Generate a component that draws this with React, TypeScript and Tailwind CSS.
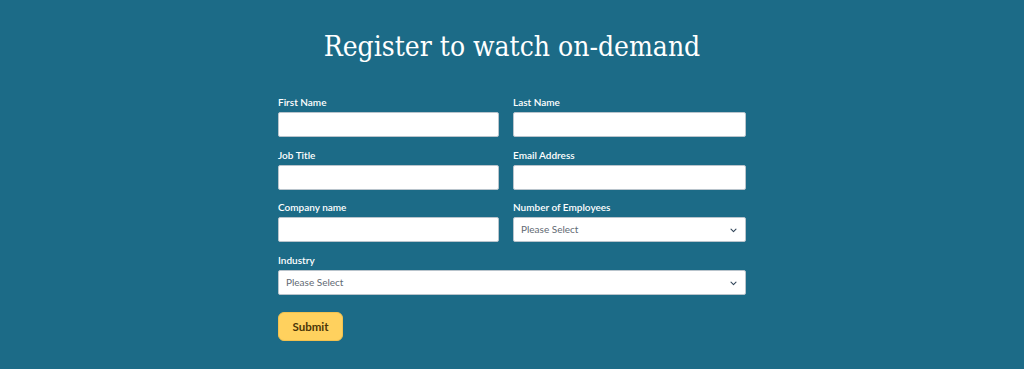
import React from 'react';

const labelCls = "block h-[14px] mt-[1px] mb-[3px] text-[10px] leading-[14px] font-semibold text-white";
const inputCls = "block h-[25px] bg-white border border-[#b9c4cc] rounded-[2px] pl-[7px] pr-2 text-[10px] text-[#33475b] outline-none";

function Chevron() {
    return (
        <svg width="7" height="5" viewBox="0 0 7 5" className="absolute right-[8px] top-[10px]" fill="none">
            <path d="M1 1.2l2.5 2.5 2.5-2.5" stroke="#33475b" strokeWidth="1.1" strokeLinecap="round" strokeLinejoin="round" />
        </svg>
    );
}

function Field({ label, width }: { label: string; width: string }) {
    return (
        <div>
            <label className={labelCls}>{label}</label>
            <input type="text" className={`${inputCls} ${width}`} />
        </div>
    );
}

function SelectField({ label, width }: { label: string; width: string }) {
    return (
        <div>
            <label className={labelCls}>{label}</label>
            <div className={`relative ${inputCls} ${width} flex items-center`}>
                <span className="text-[#5f6a73]">Please Select</span>
                <Chevron />
            </div>
        </div>
    );
}

export default function App() {
    return (
        <div
            className="w-full h-[369px] bg-[#1c6b87] flex flex-col items-center"
            style={{ fontFamily: 'Lato, "Liberation Sans", sans-serif' }}
        >
            <h1
                className="mt-[28px] h-[38px] text-[28px] leading-[38px] text-white font-light font-stretch-condensed"
                style={{ fontFamily: '"DejaVu Serif", "Liberation Serif", serif' }}
            >
                Register to watch on-demand
            </h1>

            <form className="mt-[28px] w-[468px] flex flex-col gap-[9.5px]">
                <div className="flex gap-[14px]">
                    <Field label="First Name" width="w-[221px]" />
                    <Field label="Last Name" width="w-[233px]" />
                </div>
                <div className="flex gap-[14px]">
                    <Field label="Job Title" width="w-[221px]" />
                    <Field label="Email Address" width="w-[233px]" />
                </div>
                <div className="flex gap-[14px]">
                    <Field label="Company name" width="w-[221px]" />
                    <SelectField label="Number of Employees" width="w-[233px]" />
                </div>
                <SelectField label="Industry" width="w-[468px]" />

                <div className="mt-[8px]">
                    <button
                        type="button"
                        className="h-[29px] w-[65px] rounded-[6px] bg-[#ffd15e] border border-[#f2c14e] text-[11.5px] font-bold text-[#4a3508]"
                    >
                        Submit
                    </button>
                </div>
            </form>
        </div>
    );
}
